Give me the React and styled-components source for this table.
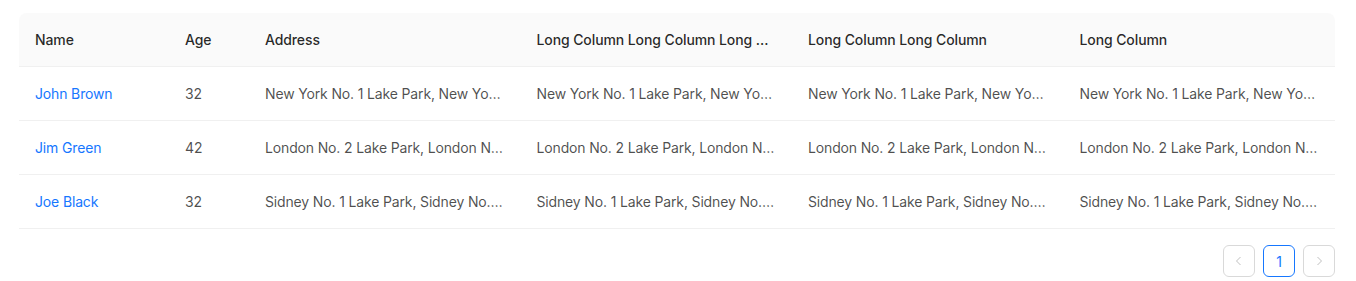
import React from "react";
import styled, { createGlobalStyle } from "styled-components";

const GlobalStyle = createGlobalStyle`
  body {
    margin: 0;
    background: #ffffff;
    font-family: Inter, "Noto Sans", "Liberation Sans", sans-serif;
  }
`;

const columns = [
  { key: "name", title: "Name", width: 150 },
  { key: "age", title: "Age", width: 80 },
  { key: "address", title: "Address" },
  { key: "long1", title: "Long Column Long Column Long Column" },
  { key: "long2", title: "Long Column Long Column" },
  { key: "long3", title: "Long Column" },
];

const rows = [
  {
    key: "1",
    name: "John Brown",
    age: 32,
    address: "New York No. 1 Lake Park, New York No. 1 Lake Park",
  },
  {
    key: "2",
    name: "Jim Green",
    age: 42,
    address: "London No. 2 Lake Park, London No. 2 Lake Park",
  },
  {
    key: "3",
    name: "Joe Black",
    age: 32,
    address: "Sidney No. 1 Lake Park, Sidney No. 1 Lake Park",
  },
];

const Page = styled.div`
  padding: 13px 21px 0 19px;
`;

const Table = styled.table`
  width: 100%;
  table-layout: fixed;
  border-collapse: separate;
  border-spacing: 0;
  font-size: 14px;
  line-height: 21px;
`;

const Th = styled.th`
  background: #fafafa;
  color: rgba(0, 0, 0, 0.85);
  font-weight: 500;
  letter-spacing: -0.1px;
  text-align: left;
  padding: 16px;
  border-bottom: 1px solid #f0f0f0;
  white-space: nowrap;
  overflow: hidden;
  text-overflow: ellipsis;

  &:first-child {
    border-top-left-radius: 8px;
  }
  &:last-child {
    border-top-right-radius: 8px;
  }
`;

const Td = styled.td`
  color: rgba(0, 0, 0, 0.7);
  padding: 16px;
  letter-spacing: -0.15px;
  border-bottom: 1px solid #f0f0f0;
  white-space: nowrap;
  overflow: hidden;
  text-overflow: ellipsis;
`;

const Link = styled.a`
  color: #1677ff;
  text-decoration: none;
  cursor: pointer;
`;

const Pager = styled.ul`
  display: flex;
  justify-content: flex-end;
  gap: 8px;
  list-style: none;
  margin: 16px 0 0;
  padding: 0;
`;

const PageItem = styled.li`
  box-sizing: border-box;
  width: 32px;
  height: 32px;
  display: flex;
  align-items: center;
  justify-content: center;
  border-radius: 6px;
  border: 1px solid ${(p) => (p.$active ? "#1677ff" : "#d9d9d9")};
  color: ${(p) => (p.$active ? "#1677ff" : "rgba(0, 0, 0, 0.25)")};
  font-size: 14px;
  font-weight: 400;
  background: #ffffff;
`;

const Arrow = ({ dir }) => (
  <svg width="10" height="10" viewBox="0 0 10 10" fill="none">
    <polyline
      points={dir === "left" ? "6.5,1 2.5,5 6.5,9" : "3.5,1 7.5,5 3.5,9"}
      stroke="currentColor"
      strokeWidth="1"
    />
  </svg>
);

const App = () => {
  const cell = (row, key) => {
    if (key === "name") return <Link>{row.name}</Link>;
    if (key === "age") return row.age;
    return row.address;
  };

  return (
    <Page>
      <GlobalStyle />
      <Table>
        <colgroup>
          {columns.map((c) => (
            <col key={c.key} style={c.width ? { width: c.width } : undefined} />
          ))}
        </colgroup>
        <thead>
          <tr>
            {columns.map((c) => (
              <Th key={c.key}>{c.title}</Th>
            ))}
          </tr>
        </thead>
        <tbody>
          {rows.map((row) => (
            <tr key={row.key}>
              {columns.map((c) => (
                <Td key={c.key}>{cell(row, c.key)}</Td>
              ))}
            </tr>
          ))}
        </tbody>
      </Table>
      <Pager>
        <PageItem>
          <Arrow dir="left" />
        </PageItem>
        <PageItem $active>1</PageItem>
        <PageItem>
          <Arrow dir="right" />
        </PageItem>
      </Pager>
    </Page>
  );
};

export default App;
